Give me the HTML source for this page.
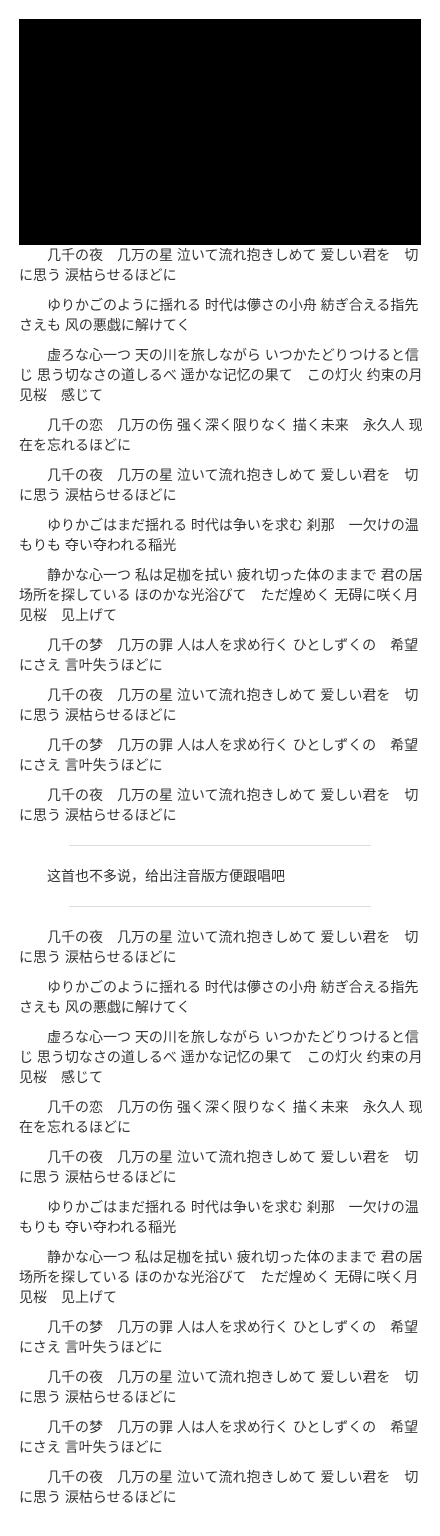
<!DOCTYPE html>
<html><head><meta charset="utf-8"><style>
body{margin:0;background:#fff;}
.w{position:absolute;left:19px;top:19px;width:402px;font-family:"Liberation Sans","Noto Sans CJK JP",sans-serif;font-size:14px;line-height:20px;color:#333;}
.v{height:226px;background:#000;}
p{margin:0 0 10px;text-indent:28px;white-space:nowrap;}
hr{border:0;border-top:1px solid #ddd;margin:20px 50px;height:0;}
</style></head><body><div class="w">
<div class="v"></div>
<p>几千の夜　几万の星 泣いて流れ抱きしめて 爱しい君を　切<br>に思う 涙枯らせるほどに</p>
<p>ゆりかごのように揺れる 时代は儚さの小舟 紡ぎ合える指先<br>さえも 风の悪戯に解けてく</p>
<p>虚ろな心一つ 天の川を旅しながら いつかたどりつけると信<br>じ 思う切なさの道しるべ 遥かな记忆の果て　この灯火 约束の月<br>见桜　感じて</p>
<p>几千の恋　几万の伤 强く深く限りなく 描く未来　永久人 现<br>在を忘れるほどに</p>
<p>几千の夜　几万の星 泣いて流れ抱きしめて 爱しい君を　切<br>に思う 涙枯らせるほどに</p>
<p>ゆりかごはまだ揺れる 时代は争いを求む 刹那　一欠けの温<br>もりも 夺い夺われる稲光</p>
<p>静かな心一つ 私は足枷を拭い 疲れ切った体のままで 君の居<br>场所を探している ほのかな光浴びて　ただ煌めく 无碍に咲く月<br>见桜　见上げて</p>
<p>几千の梦　几万の罪 人は人を求め行く ひとしずくの　希望<br>にさえ 言叶失うほどに</p>
<p>几千の夜　几万の星 泣いて流れ抱きしめて 爱しい君を　切<br>に思う 涙枯らせるほどに</p>
<p>几千の梦　几万の罪 人は人を求め行く ひとしずくの　希望<br>にさえ 言叶失うほどに</p>
<p>几千の夜　几万の星 泣いて流れ抱きしめて 爱しい君を　切<br>に思う 涙枯らせるほどに</p>
<hr>
<p>这首也不多说，给出注音版方便跟唱吧</p>
<hr>
<p>几千の夜　几万の星 泣いて流れ抱きしめて 爱しい君を　切<br>に思う 涙枯らせるほどに</p>
<p>ゆりかごのように揺れる 时代は儚さの小舟 紡ぎ合える指先<br>さえも 风の悪戯に解けてく</p>
<p>虚ろな心一つ 天の川を旅しながら いつかたどりつけると信<br>じ 思う切なさの道しるべ 遥かな记忆の果て　この灯火 约束の月<br>见桜　感じて</p>
<p>几千の恋　几万の伤 强く深く限りなく 描く未来　永久人 现<br>在を忘れるほどに</p>
<p>几千の夜　几万の星 泣いて流れ抱きしめて 爱しい君を　切<br>に思う 涙枯らせるほどに</p>
<p>ゆりかごはまだ揺れる 时代は争いを求む 刹那　一欠けの温<br>もりも 夺い夺われる稲光</p>
<p>静かな心一つ 私は足枷を拭い 疲れ切った体のままで 君の居<br>场所を探している ほのかな光浴びて　ただ煌めく 无碍に咲く月<br>见桜　见上げて</p>
<p>几千の梦　几万の罪 人は人を求め行く ひとしずくの　希望<br>にさえ 言叶失うほどに</p>
<p>几千の夜　几万の星 泣いて流れ抱きしめて 爱しい君を　切<br>に思う 涙枯らせるほどに</p>
<p>几千の梦　几万の罪 人は人を求め行く ひとしずくの　希望<br>にさえ 言叶失うほどに</p>
<p>几千の夜　几万の星 泣いて流れ抱きしめて 爱しい君を　切<br>に思う 涙枯らせるほどに</p>
</div></body></html>
